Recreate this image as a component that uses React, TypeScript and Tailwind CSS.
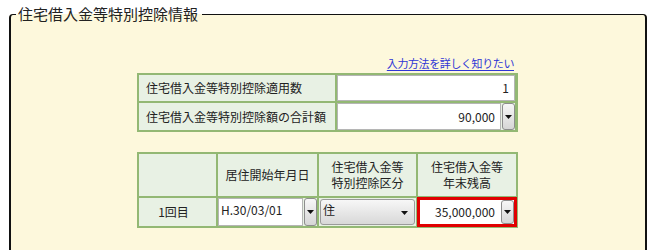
const font = { fontFamily: '"Noto Sans CJK JP", "Noto Sans", sans-serif' };

function Arrow() {
  return (
    <svg width="7" height="4" viewBox="0 0 7 4" className="block">
      <polygon points="0,0 7,0 3.5,4" fill="#111" />
    </svg>
  );
}

function DropButton() {
  return (
    <div className="w-[13px] shrink-0 self-stretch rounded-[3px] border border-[#8d8d8d] bg-gradient-to-b from-[#f7f7f7] to-[#d6d6d6] flex items-center justify-center">
      <Arrow />
    </div>
  );
}

export default function App() {
  return (
    <div className="w-[660px] h-[250px] overflow-hidden bg-white text-[#222]" style={font}>
      <fieldset className="ml-[9px] mt-[5px] w-[638px] rounded-[4px] border-t border-x-2 border-b-2 border-[#111] bg-[#fdf8dc] pb-[60px]">
        <legend className="ml-[5px] pl-[2px] pr-[4px] text-[15px] leading-[18px] text-[#222]">住宅借入金等特別控除情報</legend>

        <div className="ml-[126px] w-[381px] pt-[32px]">
          <div className="flex justify-end pr-[4px]">
            <a className="text-[11px] leading-[16px] tracking-[-0.4px] text-[#3036d6] underline underline-offset-2 cursor-pointer">
              入力方法を詳しく知りたい
            </a>
          </div>

          {/* summary table */}
          <div className="mt-[2px] grid grid-cols-[196px_178px] grid-rows-[26px_27px] gap-[2px] border-2 border-[#93b874] bg-[#93b874] text-[12px]">
            <div className="bg-[#e8f1e4] flex items-center pl-[7px]">住宅借入金等特別控除適用数</div>
            <div className="bg-white border border-[#b5b5b5] flex items-center justify-end pr-[5px]">1</div>
            <div className="bg-[#e8f1e4] flex items-center pl-[7px]">住宅借入金等特別控除額の合計額</div>
            <div className="bg-[#e8f1e4] flex gap-[1px]">
              <div className="flex-1 bg-white border border-[#b5b5b5] flex items-center justify-end pr-[5px]">90,000</div>
              <DropButton />
            </div>
          </div>

          {/* detail table */}
          <div className="mt-[20px] grid grid-cols-[77px_99px_97px_98px] grid-rows-[42px_28px] gap-[2px] border-2 border-[#93b874] bg-[#93b874] text-[12px] leading-[16px]">
            <div className="bg-[#e8f1e4]" />
            <div className="bg-[#e8f1e4] flex items-center justify-center">居住開始年月日</div>
            <div className="bg-[#e8f1e4] flex items-center justify-center text-center">
              住宅借入金等
              <br />
              特別控除区分
            </div>
            <div className="bg-[#e8f1e4] flex items-center justify-center text-center">
              住宅借入金等
              <br />
              年末残高
            </div>

            <div className="bg-[#e8f1e4] flex items-center justify-center pr-[8px]">1回目</div>
            <div className="bg-[#e8f1e4] flex gap-[1px]">
              <div className="flex-1 bg-white border border-[#b5b5b5] pl-[2px] pt-[3px]">H.30/03/01</div>
              <DropButton />
            </div>
            <div className="bg-[#e8f1e4] p-[1px]">
              <div className="h-full rounded-[3px] border border-[#9a9a9a] bg-gradient-to-b from-[#f7f7f7] to-[#d8d8d8] flex items-start justify-between pl-[2px] pr-[6px] pt-[2px]">
                <span>住</span>
                <span className="self-center"><Arrow /></span>
              </div>
            </div>
            <div className="relative bg-white">
              <div className="absolute -left-[1px] -top-[1px] -right-[1px] -bottom-[1px] border-[3px] border-[#e00000] bg-white flex gap-[3px]">
                <div className="flex-1 flex items-center justify-end pr-[3px]">35,000,000</div>
                <DropButton />
              </div>
            </div>
          </div>
        </div>
      </fieldset>
    </div>
  );
}
